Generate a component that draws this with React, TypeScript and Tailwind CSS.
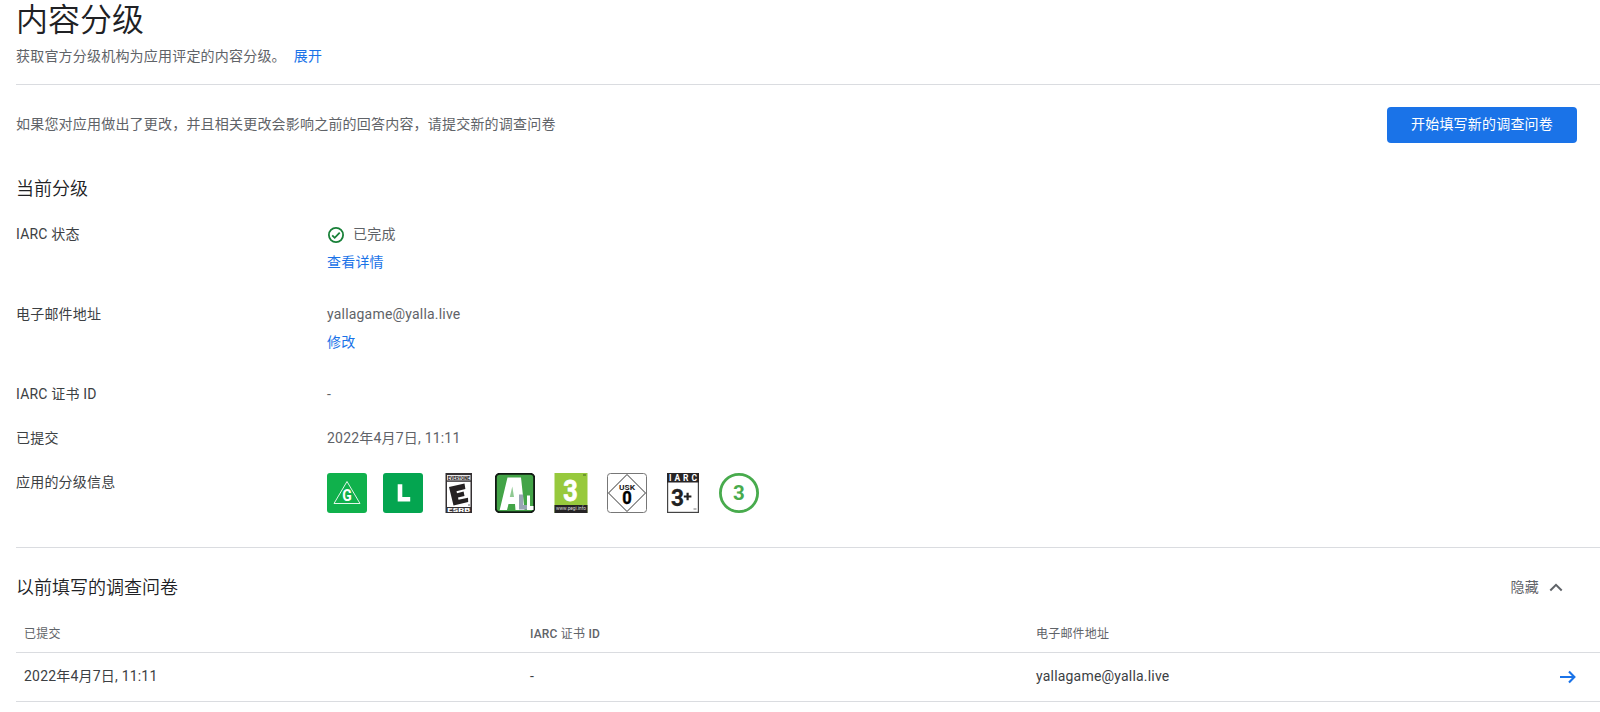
import type { ReactNode } from "react";

const badgeFont = "Roboto, sans-serif";

function Row({ label, className, children }: { label: string; className: string; children: ReactNode }) {
  return (
    <div className={`flex ${className}`}>
      <div className="w-[311px] shrink-0 text-[#3c4043]">{label}</div>
      <div>{children}</div>
    </div>
  );
}

function Link({ children }: { children: ReactNode }) {
  return (
    <a href="#" className="text-[#1a73e8]">
      {children}
    </a>
  );
}

function Badge({ children }: { children: ReactNode }) {
  return (
    <svg width="40" height="40" viewBox="0 0 40 40" fontFamily={badgeFont} textAnchor="middle" className="tracking-normal">
      {children}
    </svg>
  );
}

function Badges() {
  return (
    <div className="flex gap-4">
      <Badge>
        <rect width="40" height="40" rx="3" fill="#10b14c" />
        <path d="M20 8.5 33 30.5H7Z" fill="none" stroke="#e4f6ea" strokeWidth="1" />
        <text x="20" y="28" fontSize="16" fontWeight="700" fill="#fff" textLength="9.5" lengthAdjust="spacingAndGlyphs">G</text>
      </Badge>
      <Badge>
        <rect width="40" height="40" rx="3" fill="#04a550" />
        <path d="M14.7 11.2h4.6v12.9h7.9v4.3H14.7Z" fill="#fff" />
      </Badge>
      <Badge>
        <rect x="6.5" y="0" width="26.5" height="40" fill="#343032" />
        <rect x="8" y="2" width="23.5" height="5.4" fill="#e8e8e8" />
        <rect x="8" y="8.8" width="23.5" height="25.2" fill="#fff" />
        <text x="19.8" y="6.7" fontSize="5.5" fontWeight="900" fill="#343032" textLength="22" lengthAdjust="spacingAndGlyphs">EVERYONE</text>
        <path d="M10 14 25.5 10.6 26.4 16 17.5 18.2 18 20.2 24.6 18.5 25.5 22.9 19 24.6 19.5 26.8 29 24.8 29.2 29 14.5 32.6Z" fill="#252122" />
        <circle cx="30" cy="32" r=".7" fill="#343032" />
        <text x="19.8" y="38.9" fontSize="5.4" fontWeight="900" fill="#fff" textLength="23" lengthAdjust="spacingAndGlyphs">ESRB</text>
      </Badge>
      <Badge>
        <rect x=".8" y=".8" width="38.4" height="38.4" rx="4" fill="#43a447" stroke="#111a13" strokeWidth="2" />
        <path d="M12.5 4.5H26L29.5 37H20.5L20 31H13.5L12 37H4.7Z" fill="#fff" />
        <path d="M17.3 13.5 19 24H14.8Z" fill="#8fc992" />
        <path d="M24 21.5h4.2V32H32v4.5h-8Z" fill="#98a4b3" />
        <path d="M32 22.5h3v10.5h3.5v4H32Z" fill="#fff" />
      </Badge>
      <Badge>
        <rect x="3.5" width="33" height="40" fill="#97c93d" />
        <rect x="3.5" y="32" width="33" height="8" fill="#252324" />
        <text x="19.5" y="28" fontSize="30" fontWeight="700" fill="#fff" stroke="#fff" strokeWidth=".8" textLength="14.5" lengthAdjust="spacingAndGlyphs">3</text>
        <text x="20" y="37.4" fontSize="5" fill="#ddd" textLength="30" lengthAdjust="spacingAndGlyphs">www.pegi.info</text>
        <path d="M32 2h3" stroke="#466720" strokeWidth="1" />
      </Badge>
      <Badge>
        <rect x=".5" y=".5" width="39" height="39" rx="3" fill="#fff" stroke="#777" strokeWidth="1" />
        <path d="M20 1.5 38.5 20 20 38.5 1.5 20Z" fill="none" stroke="#333" strokeWidth="1" />
        <text x="20" y="16.7" fontSize="7.5" fontWeight="700" fill="#222" textLength="16" lengthAdjust="spacingAndGlyphs">USK</text>
        <text x="20" y="31" fontSize="17.5" fontWeight="700" fill="#000" stroke="#000" strokeWidth=".4" textLength="9.5" lengthAdjust="spacingAndGlyphs">0</text>
      </Badge>
      <Badge>
        <rect x="4.6" y=".6" width="30.8" height="38.8" fill="#fff" stroke="#444" strokeWidth="1.2" />
        <rect x="4" width="32" height="9.5" fill="#282526" />
        <text x="20" y="7.8" fontSize="8.5" fontWeight="700" fill="#fff" textLength="28" lengthAdjust="spacing">IARC</text>
        <text x="14.5" y="32.5" fontSize="24" fontWeight="700" fill="#222" stroke="#222" strokeWidth=".3" textLength="13" lengthAdjust="spacingAndGlyphs">3</text>
        <path d="M20.8 23.5h7.6M24.6 19.7v7.6" stroke="#222" strokeWidth="2.2" />
        <path d="M30.5 36h3" stroke="#777" strokeWidth="1" />
      </Badge>
      <Badge>
        <circle cx="20" cy="20" r="18.6" fill="#fff" stroke="#48ab4d" strokeWidth="2.8" />
        <text x="20" y="27.2" fontSize="20.5" fontWeight="700" fill="#48ab4d">3</text>
      </Badge>
    </div>
  );
}

export default function App() {
  return (
    <div className="h-[712px] overflow-hidden bg-white pl-4 font-[Roboto,'Noto_Sans_CJK_SC',sans-serif] text-sm leading-5 tracking-[0.2px] text-[#5f6368]">
      <header className="h-[84px]">
        <h1 className="h-[46px] text-[32px] leading-10 font-[350] tracking-normal text-[#202124]">内容分级</h1>
        <p>
          获取官方分级机构为应用评定的内容分级。
          <span className="ml-2">
            <Link>展开</Link>
          </span>
        </p>
      </header>

      <section className="h-[463px] border-t border-[#dadce0] pt-[22px]">
        <div className="flex h-9 items-center justify-between pr-[23px]">
          <p className="pb-0.5">如果您对应用做出了更改，并且相关更改会影响之前的回答内容，请提交新的调查问卷</p>
          <button className="h-9 w-[190px] rounded bg-[#1a73e8] pb-0.5 text-white">开始填写新的调查问卷</button>
        </div>
        <h2 className="mt-[34px] h-[47px] text-lg leading-6 font-[350] tracking-normal text-[#202124]">当前分级</h2>
        <Row label="IARC 状态" className="h-20">
          <div className="flex items-center">
            <svg width="18" height="18" viewBox="0 0 18 18" fill="none" stroke="#188038" strokeWidth="1.8" className="mt-px mr-2">
              <circle cx="9" cy="9" r="7.1" />
              <path d="m5.2 9.3 2.5 2.5 5-5.2" />
            </svg>
            已完成
          </div>
          <div className="mt-2">
            <Link>查看详情</Link>
          </div>
        </Row>
        <Row label="电子邮件地址" className="h-20">
          <div>yallagame@yalla.live</div>
          <div className="mt-2">
            <Link>修改</Link>
          </div>
        </Row>
        <Row label="IARC 证书 ID" className="h-11">-</Row>
        <Row label="已提交" className="h-11">2022年4月7日, 11:11</Row>
        <Row label="应用的分级信息" className="h-12">
          <div className="pt-px">
            <Badges />
          </div>
        </Row>
      </section>

      <section className="border-t border-[#dadce0] pt-7">
        <div className="flex h-6 items-center justify-between pr-[37px]">
          <h2 className="text-lg leading-6 font-[350] tracking-normal text-[#202124]">以前填写的调查问卷</h2>
          <button className="flex items-center gap-[10px] pb-0.5">
            隐藏
            <svg width="14" height="14" viewBox="0 0 14 14" fill="none" stroke="#5f6368" strokeWidth="2">
              <path d="m1.3 10.5 5.7-5.7 5.7 5.7" />
            </svg>
          </button>
        </div>
        <div className="mt-[26px] grid h-[27px] grid-cols-[506px_506px_1fr] border-b border-[#dadce0] pl-2 text-xs leading-4">
          <div>已提交</div>
          <div className="font-medium">
            IARC <span className="font-normal">证书</span> ID
          </div>
          <div>电子邮件地址</div>
        </div>
        <div className="grid h-[49px] grid-cols-[506px_506px_1fr_16px] items-center border-b border-[#dadce0] pr-6 pl-2 text-[#3c4043]">
          <div className="pb-0.5">2022年4月7日, 11:11</div>
          <div className="pb-0.5">-</div>
          <div className="pb-0.5">yallagame@yalla.live</div>
          <svg width="16" height="16" viewBox="0 0 16 16" fill="none" stroke="#1a73e8" strokeWidth="2.1">
            <path d="M0 8h14.2M9 2.5 14.4 8 9 13.5" />
          </svg>
        </div>
      </section>
    </div>
  );
}
